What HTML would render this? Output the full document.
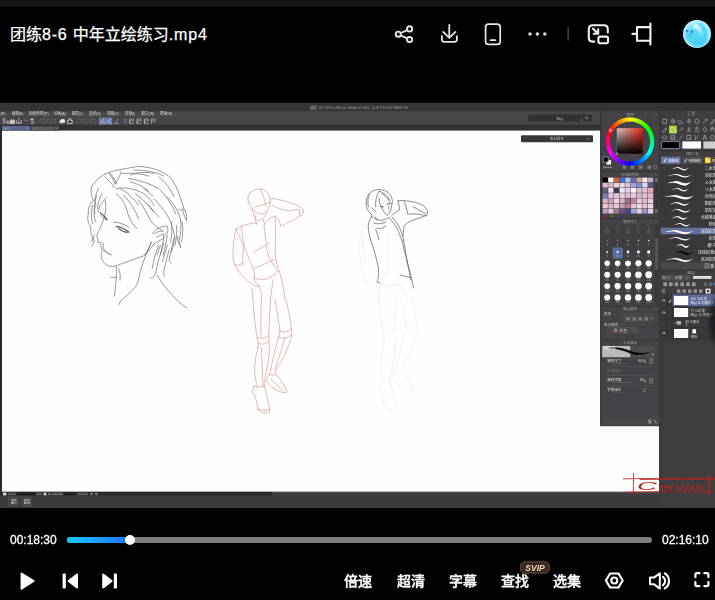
<!DOCTYPE html>
<html lang="zh-CN">
<head>
<meta charset="utf-8">
<title>团练8-6 中年立绘练习.mp4</title>
<style>
*{margin:0;padding:0;box-sizing:border-box}
html,body{width:715px;height:600px;overflow:hidden;background:#000}
body{position:relative;font-family:"Liberation Sans","Noto Sans CJK SC",sans-serif;color:#fff}
.abs{position:absolute}
#topstrip{left:0;top:0;width:715px;height:7px;background:linear-gradient(#151515,#181818)}
#title .ls{letter-spacing:0.8px}
#title{-webkit-text-stroke:0.25px #fff;left:10px;top:24px;font-size:16px;line-height:22px;white-space:nowrap;color:#fff}
.t{font-size:12px;line-height:14px;color:#fff;white-space:nowrap;-webkit-text-stroke:0.3px #fff}
.lbl{font-size:14px;line-height:20px;color:#fff;white-space:nowrap;font-weight:500;-webkit-text-stroke:0.35px #fff}
#bar{left:67px;top:537px;width:585px;height:6px;border-radius:3px;background:#7d7d7d}
#fill{left:67px;top:537px;width:64px;height:6px;border-radius:3px;background:linear-gradient(90deg,#1fc6ff,#1a73ff)}
#knob{left:125px;top:535px;width:10px;height:10px;border-radius:50%;background:#fff}
#video{left:0;top:103px;width:715px;height:405px;display:block}
#chrome{left:0;top:0;width:715px;height:600px;display:block;pointer-events:none}
</style>
</head>
<body>
<div class="abs" id="topstrip"></div>
<div class="abs" id="title">团练<span class="ls">8-6 </span>中年立绘练习<span class="ls">.mp4</span></div>

<!-- VIDEO FRAME -->
<svg class="abs" id="video" viewBox="0 103 715 405">
<defs><filter id="fblur" filterUnits="userSpaceOnUse" x="-5" y="103.8" width="725" height="403.8"><feGaussianBlur stdDeviation="0.32"/></filter><filter id="soft" x="-5%" y="-5%" width="110%" height="110%"><feGaussianBlur stdDeviation="0.35"/></filter><filter id="soft2" x="-5%" y="-5%" width="110%" height="110%"><feGaussianBlur stdDeviation="0.5"/></filter><filter id="soft3" x="-5%" y="-5%" width="110%" height="110%"><feGaussianBlur stdDeviation="0.3"/></filter></defs>
<rect x="0" y="103.8" width="715" height="403.8" fill="#3e3d40"/>
<g filter="url(#fblur)">
<rect x="-5" y="103" width="725" height="405" fill="#3e3d40"/>

<!-- app chrome backgrounds -->
<rect x="0" y="103.8" width="715" height="7.5" fill="#353436"/>
<rect x="0" y="111.3" width="715" height="13.7" fill="#49484b"/>
<rect x="0" y="124.6" width="660" height="6.2" fill="#323133"/>
<rect x="0" y="130.6" width="2" height="361" fill="#2a2a2c"/>
<rect x="2" y="130.6" width="657.1" height="361.2" fill="#fefefe"/>
<rect x="0" y="491.8" width="272" height="4" fill="#2c2c2e"/><rect x="272" y="491.8" width="388" height="1.6" fill="#4c4c4e"/>
<rect x="0" y="495.8" width="660" height="11.8" fill="#3b3a3d"/>
<!-- title text -->
<text x="359" y="109" font-family="'Liberation Sans','Noto Sans CJK SC',sans-serif" font-size="4.2" fill="#a2a2a2" text-anchor="middle" textLength="98" lengthAdjust="spacingAndGlyphs" filter="url(#soft)">插画* (11 7376 x 4967 px 400dpi 12.0%) - CLIP STUDIO PAINT EX</text>
<!-- menu text -->
<g font-family="'Liberation Sans','Noto Sans CJK SC',sans-serif" font-size="4" fill="#dcdcdc" filter="url(#soft)">
<text x="-3.5" y="115.1" textLength="9.0" lengthAdjust="spacingAndGlyphs">件(F)</text>
<text x="12.1" y="115.1" textLength="11.4" lengthAdjust="spacingAndGlyphs">编辑(E)</text>
<text x="28.5" y="115.1" textLength="20.2" lengthAdjust="spacingAndGlyphs">页面管理(P)</text>
<text x="54" y="115.1" textLength="11.8" lengthAdjust="spacingAndGlyphs">动画(A)</text>
<text x="72.1" y="115.1" textLength="11.3" lengthAdjust="spacingAndGlyphs">图层(L)</text>
<text x="88.9" y="115.1" textLength="11.8" lengthAdjust="spacingAndGlyphs">选择(S)</text>
<text x="107" y="115.1" textLength="11.7" lengthAdjust="spacingAndGlyphs">视图(V)</text>
<text x="124.9" y="115.1" textLength="10.4" lengthAdjust="spacingAndGlyphs">滤镜(I)</text>
<text x="141.2" y="115.1" textLength="13.1" lengthAdjust="spacingAndGlyphs">窗口(W)</text>
<text x="160.1" y="115.1" textLength="12.1" lengthAdjust="spacingAndGlyphs">帮助(H)</text>
</g>
<!-- toolbar icons -->
<rect x="0" y="117.6" width="600" height="7.2" fill="#464548"/>
<g fill="none" stroke="#cdcdcd" stroke-width=".75" stroke-linecap="round" stroke-linejoin="round" filter="url(#soft)">
<path d="M5.4 118.8 H3 V120.8 H5 Q6 121.8 5 123 H3 M6.6 121 q1.4 -.6 1.6 1 q-.4 1.6 -1.6 .6 M8.2 121 v3"/>
<path d="M10 123.2 V121 l1.2 -1.6 1.2 1.6 V123.2 Z M12.6 123.2 v-2.6 l1 -1 1 1 v2.6z" fill="#cdcdcd"/>
<path d="M16.4 120.4 V123.2 H21.2 V120.4 M18.8 118.6 V123.2"/>
<path d="M24.4 120.2 H28" opacity=".55"/>
<path d="M30.4 119.4 H33.6 M32 118.4 V120 M31 121.2 Q34.4 120.6 34 122.6 Q33.4 123.8 31.6 123.4"/>
<path d="M37.4 123 l3.4 -4 M42 119 h3.6 v4 h-3.6z M48 119 h3.6 v4 h-3.6z M54 119.6 h2 M54 121 h2 M54 122.4 h2" opacity=".22"/>
<path d="M60 122.6 q-1 -1.6 .6 -2 q.6 -1.8 2.4 -1 q1.8 -.4 1.6 1.4 q1 1 -.4 1.6z" fill="#f2f2f2" stroke="#f2f2f2"/>
<path d="M67.6 123.2 V120.4 H69 V118.8 H70.8 V120.4 H72.2 V123.2 Z" stroke="#e8e8e8"/>
<path d="M77 119 h4 v4 h-4z M84 119 h4 v4 h-4z M91 119 h4 v4 h-4z" opacity=".2"/>
</g>
<rect x="99" y="117.6" width="13.4" height="7" fill="#6f7ba6"/>
<g stroke="#d0d6ee" stroke-width=".8" fill="none"><path d="M100.6 123 l3.6-4.4 M103 123 h2 M107 123 l3.6-4.4 M109.4 123 h2"/></g>
<g stroke="#c2c2c2" stroke-width=".65" fill="none" filter="url(#soft)">
<path d="M114.6 123.2 l4-4.4 M114.6 123.4 h4.4"/>
<path d="M123.4 119.4 h3.6 M123.4 121.2 h3.6 M123.4 123 h3.6" opacity=".5"/>
<path d="M129.6 119 h4 v2 h-4 v2.6 h4 M129.6 119 v4.6"/>
<path d="M137 119 h4 v2 h-4 v2.6 h4 M137 119 v4.6"/>
<path d="M144.4 119 h4 v2 h-4 v2.6 h4 M144.4 119 v4.6"/>
<path d="M151.4 119 h3.4 v2.2 h-3.4 M151.4 119 v4.8"/>
</g>
<!-- document tabs -->
<rect x="2" y="126" width="28" height="4.8" fill="#5c678f"/>
<rect x="30.4" y="126" width="28.4" height="4.8" fill="#4c4c4e"/>
<g font-family="'Liberation Sans','Noto Sans CJK SC',sans-serif" font-size="3.2" fill="#c4c8dc" opacity=".55" filter="url(#soft)">
<text x="3" y="129.8">插画*</text><text x="26.6" y="129.8">×</text>
<text x="32" y="129.8" fill="#b0b0b0" textLength="21">插画(2)(12.0%)</text><text x="55.4" y="129.8" fill="#c8c8c8">×</text>
</g>
<!-- command bar boxes -->
<rect x="528.2" y="114.4" width="63.8" height="7.2" rx="1" fill="#323234"/>
<text x="560" y="119.8" font-family="'Liberation Sans','Noto Sans CJK SC',sans-serif" font-size="3.5" fill="#a6a6a6" text-anchor="middle" filter="url(#soft)">图层</text>
<path d="M580 120 h3 M586 117.4 l1.6 1.6 M586.6 116.8 a1 1 0 1 0 .1 0" stroke="#9a9a9a" stroke-width=".6" fill="none"/>
<rect x="521" y="135.2" width="72" height="7" rx="1" fill="#38383a"/>
<text x="557" y="140.4" font-family="'Liberation Sans','Noto Sans CJK SC',sans-serif" font-size="3.5" fill="#b0b0b0" text-anchor="middle" filter="url(#soft)">素材属性</text>
<path d="M586.6 138.8 h3" stroke="#8a8a8a" stroke-width=".7"/>
<!-- status bar bits -->
<g fill="#a8a8a8">
<rect x="3" y="492.6" width="3.4" height="2.8" fill="#d8d8d8"/><rect x="8" y="492.8" width="8" height="2.4" opacity=".35"/>
<rect x="17" y="493" width="18" height="2" fill="#1e1e20"/><rect x="36" y="492.8" width="6" height="2.4" opacity=".4"/>
<rect x="43.6" y="492.6" width="2.8" height="2.8" fill="#d0d0d0"/><rect x="48" y="492.8" width="3" height="2.4" opacity=".5"/>
<rect x="52" y="492.8" width="11" height="2.4" opacity=".45"/><rect x="64" y="493" width="12" height="2" fill="#1e1e20"/>
<rect x="77" y="492.8" width="11" height="2.4" opacity=".35"/><rect x="90" y="492.8" width="3" height="2.4" opacity=".5"/><rect x="95" y="492.8" width="3" height="2.4" opacity=".5"/>
</g>

<!-- bottom icons -->
<g fill="#464547" stroke="#5a5a5c" stroke-width=".5"><rect x="8.6" y="497" width="10.2" height="9.2"/><rect x="21.2" y="497" width="10.6" height="9.2"/></g>
<g fill="#a4a4a4" filter="url(#soft)"><rect x="11.2" y="499.2" width="5.4" height="1.4"/><rect x="11.2" y="501.4" width="3" height="2.6"/><rect x="15" y="501.4" width="1.6" height="2.6" opacity=".6"/><rect x="24" y="499.2" width="6" height="1.4"/><rect x="24" y="501.4" width="2.4" height="2.6"/><rect x="27" y="501.4" width="3" height="2.6" opacity=".7"/></g>
<!-- floating palette panel -->
<rect x="600.2" y="111.3" width="58.8" height="314.4" fill="#444346"/>
<rect x="600.2" y="111.3" width="1.3" height="314.4" fill="#333234"/>
<rect x="658.9" y="111.3" width="1" height="315" fill="#302f31"/>
<rect x="659.2" y="111.3" width="55.8" height="396.3" fill="#403e41"/><rect x="659.2" y="111.3" width="3.6" height="396.3" fill="#3b3a3c"/>
<text x="630" y="115.8" font-family="'Liberation Sans','Noto Sans CJK SC',sans-serif" font-size="3.8" fill="#a0a0a0" text-anchor="middle" filter="url(#soft)">色环</text>
<path d="M653 114.6 l1.6 0 M655.6 113.6 l1.2 1.2 -1.2 1.2" stroke="#8a8a8a" stroke-width=".5" fill="none"/>
<g filter="url(#soft)">
<path d="M629.75 117.40A24.2 24.2 0 0 1 632.36 117.52L631.96 121.60A20.1 20.1 0 0 0 629.79 121.50Z" fill="#f4ff00"/>
<path d="M631.86 117.47A24.2 24.2 0 0 1 634.45 117.81L633.70 121.84A20.1 20.1 0 0 0 631.54 121.56Z" fill="#dfff00"/>
<path d="M633.95 117.72A24.2 24.2 0 0 1 636.51 118.29L635.41 122.24A20.1 20.1 0 0 0 633.28 121.77Z" fill="#c9ff00"/>
<path d="M636.02 118.16A24.2 24.2 0 0 1 638.51 118.95L637.07 122.79A20.1 20.1 0 0 0 635.00 122.13Z" fill="#b4ff00"/>
<path d="M638.04 118.77A24.2 24.2 0 0 1 640.46 119.78L638.68 123.47A20.1 20.1 0 0 0 636.68 122.64Z" fill="#9fff00"/>
<path d="M640.00 119.56A24.2 24.2 0 0 1 642.32 120.77L640.23 124.30A20.1 20.1 0 0 0 638.30 123.30Z" fill="#8aff00"/>
<path d="M641.88 120.52A24.2 24.2 0 0 1 644.09 121.92L641.70 125.26A20.1 20.1 0 0 0 639.87 124.09Z" fill="#74ff00"/>
<path d="M643.67 121.63A24.2 24.2 0 0 1 645.75 123.23L643.08 126.34A20.1 20.1 0 0 0 641.36 125.02Z" fill="#5fff00"/>
<path d="M645.36 122.90A24.2 24.2 0 0 1 647.29 124.67L644.36 127.54A20.1 20.1 0 0 0 642.76 126.07Z" fill="#4aff00"/>
<path d="M646.93 124.31A24.2 24.2 0 0 1 648.70 126.24L645.53 128.84A20.1 20.1 0 0 0 644.06 127.24Z" fill="#35ff00"/>
<path d="M648.37 125.85A24.2 24.2 0 0 1 649.97 127.93L646.58 130.24A20.1 20.1 0 0 0 645.26 128.52Z" fill="#1fff00"/>
<path d="M649.68 127.51A24.2 24.2 0 0 1 651.08 129.72L647.51 131.73A20.1 20.1 0 0 0 646.34 129.90Z" fill="#0aff00"/>
<path d="M650.83 129.28A24.2 24.2 0 0 1 652.04 131.60L648.30 133.30A20.1 20.1 0 0 0 647.30 131.37Z" fill="#00ff0a"/>
<path d="M651.82 131.14A24.2 24.2 0 0 1 652.83 133.56L648.96 134.92A20.1 20.1 0 0 0 648.13 132.92Z" fill="#00ff1f"/>
<path d="M652.65 133.09A24.2 24.2 0 0 1 653.44 135.58L649.47 136.60A20.1 20.1 0 0 0 648.81 134.53Z" fill="#00ff35"/>
<path d="M653.31 135.09A24.2 24.2 0 0 1 653.88 137.65L649.83 138.32A20.1 20.1 0 0 0 649.36 136.19Z" fill="#00ff4a"/>
<path d="M653.79 137.15A24.2 24.2 0 0 1 654.13 139.74L650.04 140.06A20.1 20.1 0 0 0 649.76 137.90Z" fill="#00ff5f"/>
<path d="M654.08 139.24A24.2 24.2 0 0 1 654.20 141.85L650.10 141.81A20.1 20.1 0 0 0 650.00 139.64Z" fill="#00ff74"/>
<path d="M654.20 141.35A24.2 24.2 0 0 1 654.08 143.96L650.00 143.56A20.1 20.1 0 0 0 650.10 141.39Z" fill="#00ff8a"/>
<path d="M654.13 143.46A24.2 24.2 0 0 1 653.79 146.05L649.76 145.30A20.1 20.1 0 0 0 650.04 143.14Z" fill="#00ff9f"/>
<path d="M653.88 145.55A24.2 24.2 0 0 1 653.31 148.11L649.36 147.01A20.1 20.1 0 0 0 649.83 144.88Z" fill="#00ffb4"/>
<path d="M653.44 147.62A24.2 24.2 0 0 1 652.65 150.11L648.81 148.67A20.1 20.1 0 0 0 649.47 146.60Z" fill="#00ffc9"/>
<path d="M652.83 149.64A24.2 24.2 0 0 1 651.82 152.06L648.13 150.28A20.1 20.1 0 0 0 648.96 148.28Z" fill="#00ffdf"/>
<path d="M652.04 151.60A24.2 24.2 0 0 1 650.83 153.92L647.30 151.83A20.1 20.1 0 0 0 648.30 149.90Z" fill="#00fff4"/>
<path d="M651.08 153.48A24.2 24.2 0 0 1 649.68 155.69L646.34 153.30A20.1 20.1 0 0 0 647.51 151.47Z" fill="#00f4ff"/>
<path d="M649.97 155.27A24.2 24.2 0 0 1 648.37 157.35L645.26 154.68A20.1 20.1 0 0 0 646.58 152.96Z" fill="#00dfff"/>
<path d="M648.70 156.96A24.2 24.2 0 0 1 646.93 158.89L644.06 155.96A20.1 20.1 0 0 0 645.53 154.36Z" fill="#00c9ff"/>
<path d="M647.29 158.53A24.2 24.2 0 0 1 645.36 160.30L642.76 157.13A20.1 20.1 0 0 0 644.36 155.66Z" fill="#00b4ff"/>
<path d="M645.75 159.97A24.2 24.2 0 0 1 643.67 161.57L641.36 158.18A20.1 20.1 0 0 0 643.08 156.86Z" fill="#009fff"/>
<path d="M644.09 161.28A24.2 24.2 0 0 1 641.88 162.68L639.87 159.11A20.1 20.1 0 0 0 641.70 157.94Z" fill="#008aff"/>
<path d="M642.32 162.43A24.2 24.2 0 0 1 640.00 163.64L638.30 159.90A20.1 20.1 0 0 0 640.23 158.90Z" fill="#0074ff"/>
<path d="M640.46 163.42A24.2 24.2 0 0 1 638.04 164.43L636.68 160.56A20.1 20.1 0 0 0 638.68 159.73Z" fill="#005fff"/>
<path d="M638.51 164.25A24.2 24.2 0 0 1 636.02 165.04L635.00 161.07A20.1 20.1 0 0 0 637.07 160.41Z" fill="#004aff"/>
<path d="M636.51 164.91A24.2 24.2 0 0 1 633.95 165.48L633.28 161.43A20.1 20.1 0 0 0 635.41 160.96Z" fill="#0035ff"/>
<path d="M634.45 165.39A24.2 24.2 0 0 1 631.86 165.73L631.54 161.64A20.1 20.1 0 0 0 633.70 161.36Z" fill="#001fff"/>
<path d="M632.36 165.68A24.2 24.2 0 0 1 629.75 165.80L629.79 161.70A20.1 20.1 0 0 0 631.96 161.60Z" fill="#000aff"/>
<path d="M630.25 165.80A24.2 24.2 0 0 1 627.64 165.68L628.04 161.60A20.1 20.1 0 0 0 630.21 161.70Z" fill="#0a00ff"/>
<path d="M628.14 165.73A24.2 24.2 0 0 1 625.55 165.39L626.30 161.36A20.1 20.1 0 0 0 628.46 161.64Z" fill="#1f00ff"/>
<path d="M626.05 165.48A24.2 24.2 0 0 1 623.49 164.91L624.59 160.96A20.1 20.1 0 0 0 626.72 161.43Z" fill="#3500ff"/>
<path d="M623.98 165.04A24.2 24.2 0 0 1 621.49 164.25L622.93 160.41A20.1 20.1 0 0 0 625.00 161.07Z" fill="#4a00ff"/>
<path d="M621.96 164.43A24.2 24.2 0 0 1 619.54 163.42L621.32 159.73A20.1 20.1 0 0 0 623.32 160.56Z" fill="#5f00ff"/>
<path d="M620.00 163.64A24.2 24.2 0 0 1 617.68 162.43L619.77 158.90A20.1 20.1 0 0 0 621.70 159.90Z" fill="#7400ff"/>
<path d="M618.12 162.68A24.2 24.2 0 0 1 615.91 161.28L618.30 157.94A20.1 20.1 0 0 0 620.13 159.11Z" fill="#8a00ff"/>
<path d="M616.33 161.57A24.2 24.2 0 0 1 614.25 159.97L616.92 156.86A20.1 20.1 0 0 0 618.64 158.18Z" fill="#9f00ff"/>
<path d="M614.64 160.30A24.2 24.2 0 0 1 612.71 158.53L615.64 155.66A20.1 20.1 0 0 0 617.24 157.13Z" fill="#b400ff"/>
<path d="M613.07 158.89A24.2 24.2 0 0 1 611.30 156.96L614.47 154.36A20.1 20.1 0 0 0 615.94 155.96Z" fill="#c900ff"/>
<path d="M611.63 157.35A24.2 24.2 0 0 1 610.03 155.27L613.42 152.96A20.1 20.1 0 0 0 614.74 154.68Z" fill="#df00ff"/>
<path d="M610.32 155.69A24.2 24.2 0 0 1 608.92 153.48L612.49 151.47A20.1 20.1 0 0 0 613.66 153.30Z" fill="#f400ff"/>
<path d="M609.17 153.92A24.2 24.2 0 0 1 607.96 151.60L611.70 149.90A20.1 20.1 0 0 0 612.70 151.83Z" fill="#ff00f4"/>
<path d="M608.18 152.06A24.2 24.2 0 0 1 607.17 149.64L611.04 148.28A20.1 20.1 0 0 0 611.87 150.28Z" fill="#ff00df"/>
<path d="M607.35 150.11A24.2 24.2 0 0 1 606.56 147.62L610.53 146.60A20.1 20.1 0 0 0 611.19 148.67Z" fill="#ff00c9"/>
<path d="M606.69 148.11A24.2 24.2 0 0 1 606.12 145.55L610.17 144.88A20.1 20.1 0 0 0 610.64 147.01Z" fill="#ff00b4"/>
<path d="M606.21 146.05A24.2 24.2 0 0 1 605.87 143.46L609.96 143.14A20.1 20.1 0 0 0 610.24 145.30Z" fill="#ff009f"/>
<path d="M605.92 143.96A24.2 24.2 0 0 1 605.80 141.35L609.90 141.39A20.1 20.1 0 0 0 610.00 143.56Z" fill="#ff008a"/>
<path d="M605.80 141.85A24.2 24.2 0 0 1 605.92 139.24L610.00 139.64A20.1 20.1 0 0 0 609.90 141.81Z" fill="#ff0074"/>
<path d="M605.87 139.74A24.2 24.2 0 0 1 606.21 137.15L610.24 137.90A20.1 20.1 0 0 0 609.96 140.06Z" fill="#ff005f"/>
<path d="M606.12 137.65A24.2 24.2 0 0 1 606.69 135.09L610.64 136.19A20.1 20.1 0 0 0 610.17 138.32Z" fill="#ff004a"/>
<path d="M606.56 135.58A24.2 24.2 0 0 1 607.35 133.09L611.19 134.53A20.1 20.1 0 0 0 610.53 136.60Z" fill="#ff0035"/>
<path d="M607.17 133.56A24.2 24.2 0 0 1 608.18 131.14L611.87 132.92A20.1 20.1 0 0 0 611.04 134.92Z" fill="#ff001f"/>
<path d="M607.96 131.60A24.2 24.2 0 0 1 609.17 129.28L612.70 131.37A20.1 20.1 0 0 0 611.70 133.30Z" fill="#ff000a"/>
<path d="M608.92 129.72A24.2 24.2 0 0 1 610.32 127.51L613.66 129.90A20.1 20.1 0 0 0 612.49 131.73Z" fill="#ff0a00"/>
<path d="M610.03 127.93A24.2 24.2 0 0 1 611.63 125.85L614.74 128.52A20.1 20.1 0 0 0 613.42 130.24Z" fill="#ff1f00"/>
<path d="M611.30 126.24A24.2 24.2 0 0 1 613.07 124.31L615.94 127.24A20.1 20.1 0 0 0 614.47 128.84Z" fill="#ff3500"/>
<path d="M612.71 124.67A24.2 24.2 0 0 1 614.64 122.90L617.24 126.07A20.1 20.1 0 0 0 615.64 127.54Z" fill="#ff4a00"/>
<path d="M614.25 123.23A24.2 24.2 0 0 1 616.33 121.63L618.64 125.02A20.1 20.1 0 0 0 616.92 126.34Z" fill="#ff5f00"/>
<path d="M615.91 121.92A24.2 24.2 0 0 1 618.12 120.52L620.13 124.09A20.1 20.1 0 0 0 618.30 125.26Z" fill="#ff7400"/>
<path d="M617.68 120.77A24.2 24.2 0 0 1 620.00 119.56L621.70 123.30A20.1 20.1 0 0 0 619.77 124.30Z" fill="#ff8a00"/>
<path d="M619.54 119.78A24.2 24.2 0 0 1 621.96 118.77L623.32 122.64A20.1 20.1 0 0 0 621.32 123.47Z" fill="#ff9f00"/>
<path d="M621.49 118.95A24.2 24.2 0 0 1 623.98 118.16L625.00 122.13A20.1 20.1 0 0 0 622.93 122.79Z" fill="#ffb400"/>
<path d="M623.49 118.29A24.2 24.2 0 0 1 626.05 117.72L626.72 121.77A20.1 20.1 0 0 0 624.59 122.24Z" fill="#ffc900"/>
<path d="M625.55 117.81A24.2 24.2 0 0 1 628.14 117.47L628.46 121.56A20.1 20.1 0 0 0 626.30 121.84Z" fill="#ffdf00"/>
<path d="M627.64 117.52A24.2 24.2 0 0 1 630.25 117.40L630.21 121.50A20.1 20.1 0 0 0 628.04 121.60Z" fill="#fff400"/>
</g>
<defs><linearGradient id="svh" x1="0" y1="0" x2="1" y2="0"><stop offset="0" stop-color="#dccaca"/><stop offset="1" stop-color="#ee240e"/></linearGradient><linearGradient id="svv" x1="0" y1="0" x2="0" y2="1"><stop offset="0" stop-color="#000" stop-opacity="0"/><stop offset="1" stop-color="#000" stop-opacity="1"/></linearGradient></defs>
<rect x="616.8" y="128.2" width="26" height="25.6" fill="url(#svh)"/><rect x="616.8" y="128.2" width="26" height="25.6" fill="url(#svv)"/>
<circle cx="610.6" cy="130.4" r="1.3" fill="none" stroke="#fff" stroke-width=".7"/>
<circle cx="617" cy="153.6" r=".9" fill="none" stroke="#ddd" stroke-width=".5"/>
<rect x="606.4" y="160" width="4.6" height="4.6" fill="#fff" stroke="#888" stroke-width=".4"/>
<rect x="603.2" y="157" width="5" height="5" fill="#05050f" stroke="#9a9ac8" stroke-width=".7"/>
<rect x="603" y="166.6" width="9" height="1.6" fill="#9a9a9a" opacity=".7"/>
<rect x="622.6" y="165.4" width="3.6" height="3.4" fill="#8e8e90" opacity=".7" filter="url(#soft)"/>
<rect x="630.6" y="165.4" width="3.6" height="3.4" fill="#8e8e90" opacity=".7" filter="url(#soft)"/>
<rect x="639" y="165.4" width="3.6" height="3.4" fill="#8e8e90" opacity=".7" filter="url(#soft)"/>
<rect x="647.4" y="165.4" width="3.6" height="3.4" fill="#8e8e90" opacity=".7" filter="url(#soft)"/>
<circle cx="655" cy="166.8" r="1.7" fill="none" stroke="#8a8a8a" stroke-width=".6"/>
<rect x="601.8" y="171" width="57.4" height=".6" fill="#2c2c2e"/>
<text x="630" y="175.6" font-family="'Liberation Sans','Noto Sans CJK SC',sans-serif" font-size="3.5" fill="#9c9c9c" text-anchor="middle" filter="url(#soft)">标准颜色集</text>
<path d="M651 175 h1.8 M655.4 173.4 l1.2 1.2 -1.2 1.2" stroke="#8a8a8a" stroke-width=".5" fill="none"/>
<g filter="url(#soft)"><rect x="602.2" y="177.2" width="51.8" height="37" fill="#4a3e4c"/>
<rect x="602.6" y="177.6" width="5.22" height="4.75" fill="#000000"/>
<rect x="608.3" y="177.6" width="5.22" height="4.75" fill="#ffffff"/>
<rect x="613.9" y="177.6" width="5.22" height="4.75" fill="#d4622c"/>
<rect x="619.6" y="177.6" width="5.22" height="4.75" fill="#3c74d8"/>
<rect x="625.3" y="177.6" width="5.22" height="4.75" fill="#b0c4f0"/>
<rect x="631.0" y="177.6" width="5.22" height="4.75" fill="#6c6cac"/>
<rect x="636.6" y="177.6" width="5.22" height="4.75" fill="#d8a8a0"/>
<rect x="642.3" y="177.6" width="5.22" height="4.75" fill="#f8f0f4"/>
<rect x="648.0" y="177.6" width="5.22" height="4.75" fill="#c8a8cc"/>
<rect x="602.6" y="182.8" width="5.22" height="4.75" fill="#dcbcd0"/>
<rect x="608.3" y="182.8" width="5.22" height="4.75" fill="#d4b4c8"/>
<rect x="613.9" y="182.8" width="5.22" height="4.75" fill="#e8d0dc"/>
<rect x="619.6" y="182.8" width="5.22" height="4.75" fill="#ecd8e4"/>
<rect x="625.3" y="182.8" width="5.22" height="4.75" fill="#d8c0d8"/>
<rect x="631.0" y="182.8" width="5.22" height="4.75" fill="#a8a8e0"/>
<rect x="636.6" y="182.8" width="5.22" height="4.75" fill="#8090c8"/>
<rect x="642.3" y="182.8" width="5.22" height="4.75" fill="#e0dcec"/>
<rect x="648.0" y="182.8" width="5.22" height="4.75" fill="#585880"/>
<rect x="602.6" y="188.0" width="5.22" height="4.75" fill="#5c5c74"/>
<rect x="608.3" y="188.0" width="5.22" height="4.75" fill="#ece4f0"/>
<rect x="613.9" y="188.0" width="5.22" height="4.75" fill="#38384c"/>
<rect x="619.6" y="188.0" width="5.22" height="4.75" fill="#f0e8f0"/>
<rect x="625.3" y="188.0" width="5.22" height="4.75" fill="#e4d0e0"/>
<rect x="631.0" y="188.0" width="5.22" height="4.75" fill="#fcf8fc"/>
<rect x="636.6" y="188.0" width="5.22" height="4.75" fill="#d8bcd0"/>
<rect x="642.3" y="188.0" width="5.22" height="4.75" fill="#e0c0d4"/>
<rect x="648.0" y="188.0" width="5.22" height="4.75" fill="#e8a4b8"/>
<rect x="602.6" y="193.2" width="5.22" height="4.75" fill="#7480a4"/>
<rect x="608.3" y="193.2" width="5.22" height="4.75" fill="#dcc8d8"/>
<rect x="613.9" y="193.2" width="5.22" height="4.75" fill="#e0c4d4"/>
<rect x="619.6" y="193.2" width="5.22" height="4.75" fill="#e8d0dc"/>
<rect x="625.3" y="193.2" width="5.22" height="4.75" fill="#dcc0d0"/>
<rect x="631.0" y="193.2" width="5.22" height="4.75" fill="#e4ccdc"/>
<rect x="636.6" y="193.2" width="5.22" height="4.75" fill="#d8b8cc"/>
<rect x="642.3" y="193.2" width="5.22" height="4.75" fill="#e0c0d4"/>
<rect x="648.0" y="193.2" width="5.22" height="4.75" fill="#e4b4c8"/>
<rect x="602.6" y="198.4" width="5.22" height="4.75" fill="#dcb4cc"/>
<rect x="608.3" y="198.4" width="5.22" height="4.75" fill="#c4a0bc"/>
<rect x="613.9" y="198.4" width="5.22" height="4.75" fill="#ecd4e0"/>
<rect x="619.6" y="198.4" width="5.22" height="4.75" fill="#d4b4c4"/>
<rect x="625.3" y="198.4" width="5.22" height="4.75" fill="#a46c84"/>
<rect x="631.0" y="198.4" width="5.22" height="4.75" fill="#bc8898"/>
<rect x="636.6" y="198.4" width="5.22" height="4.75" fill="#e8ccd8"/>
<rect x="642.3" y="198.4" width="5.22" height="4.75" fill="#dcbcd0"/>
<rect x="648.0" y="198.4" width="5.22" height="4.75" fill="#e8ccdc"/>
<rect x="602.6" y="203.6" width="5.22" height="4.75" fill="#e8ccdc"/>
<rect x="608.3" y="203.6" width="5.22" height="4.75" fill="#d8b4c8"/>
<rect x="613.9" y="203.6" width="5.22" height="4.75" fill="#e4c8d8"/>
<rect x="619.6" y="203.6" width="5.22" height="4.75" fill="#c49cb0"/>
<rect x="625.3" y="203.6" width="5.22" height="4.75" fill="#b48094"/>
<rect x="631.0" y="203.6" width="5.22" height="4.75" fill="#e4c8d4"/>
<rect x="636.6" y="203.6" width="5.22" height="4.75" fill="#ecd8e4"/>
<rect x="642.3" y="203.6" width="5.22" height="4.75" fill="#e0c4d8"/>
<rect x="648.0" y="203.6" width="5.22" height="4.75" fill="#ecd4e0"/>
<rect x="602.6" y="208.8" width="5.22" height="4.75" fill="#bc9cb8"/>
<rect x="608.3" y="208.8" width="5.22" height="4.75" fill="#e4c8dc"/>
<rect x="613.9" y="208.8" width="5.22" height="4.75" fill="#a07890"/>
<rect x="619.6" y="208.8" width="5.22" height="4.75" fill="#785478"/>
<rect x="625.3" y="208.8" width="5.22" height="4.75" fill="#484880"/>
<rect x="631.0" y="208.8" width="5.22" height="4.75" fill="#98a4e0"/>
<rect x="636.6" y="208.8" width="5.22" height="4.75" fill="#e4d0e4"/>
<rect x="642.3" y="208.8" width="5.22" height="4.75" fill="#9898d0"/>
<rect x="648.0" y="208.8" width="5.22" height="4.75" fill="#ecccd8"/>
</g>
<rect x="654.6" y="176.8" width="3.6" height="37.8" fill="#39383b"/><rect x="655" y="178" width="2.8" height="4" fill="#6a6a6c"/><rect x="655" y="209" width="2.8" height="4" fill="#6a6a6c"/>
<rect x="602.6" y="215.4" width="2.4" height="1.6" fill="#c01818"/><rect x="610.6" y="215.4" width="2.4" height="1.6" fill="#18a018"/><rect x="620.6" y="215.4" width="2.4" height="1.6" fill="#2828c8"/>
<rect x="601.8" y="218.4" width="57.4" height=".6" fill="#2c2c2e"/>
<text x="630" y="223" font-family="'Liberation Sans','Noto Sans CJK SC',sans-serif" font-size="3.5" fill="#9c9c9c" text-anchor="middle" filter="url(#soft)">笔刷尺寸</text>
<path d="M651 222.4 h1.8 M655.4 220.8 l1.2 1.2 -1.2 1.2" stroke="#8a8a8a" stroke-width=".5" fill="none"/>
<rect x="602.4" y="224.6" width="52" height="80" fill="#414043"/>
<rect x="612.5" y="224.6" width=".4" height="80" fill="#38373a"/>
<rect x="622.9" y="224.6" width=".4" height="80" fill="#38373a"/>
<rect x="633.3" y="224.6" width=".4" height="80" fill="#38373a"/>
<rect x="643.6" y="224.6" width=".4" height="80" fill="#38373a"/>
<rect x="654.8" y="224.6" width="3.4" height="80" fill="#38373a"/><rect x="655.2" y="238" width="2.6" height="32" fill="#59595b"/>
<rect x="612.7" y="247.4" width="10.2" height="11.2" fill="#5a6a9a"/>
<g filter="url(#soft)">
<rect x="606.9000000000001" y="226.0" width=".5" height="3" fill="#6e6e70"/>
<text x="607.2" y="233.0" font-family="'Liberation Sans','Noto Sans CJK SC',sans-serif" font-size="2.6" fill="#b4b8c8" text-anchor="middle" opacity=".8">0.7</text>
<rect x="617.3000000000001" y="226.0" width=".5" height="3" fill="#6e6e70"/>
<text x="617.6" y="233.0" font-family="'Liberation Sans','Noto Sans CJK SC',sans-serif" font-size="2.6" fill="#b4b8c8" text-anchor="middle" opacity=".8">1</text>
<rect x="627.7" y="226.0" width=".5" height="3" fill="#6e6e70"/>
<text x="628" y="233.0" font-family="'Liberation Sans','Noto Sans CJK SC',sans-serif" font-size="2.6" fill="#b4b8c8" text-anchor="middle" opacity=".8">1.5</text>
<rect x="638.1" y="226.0" width=".5" height="3" fill="#6e6e70"/>
<text x="638.4" y="233.0" font-family="'Liberation Sans','Noto Sans CJK SC',sans-serif" font-size="2.6" fill="#b4b8c8" text-anchor="middle" opacity=".8">2</text>
<rect x="648.4000000000001" y="226.0" width=".5" height="3" fill="#6e6e70"/>
<text x="648.7" y="233.0" font-family="'Liberation Sans','Noto Sans CJK SC',sans-serif" font-size="2.6" fill="#b4b8c8" text-anchor="middle" opacity=".8">2.5</text>
<circle cx="607.2" cy="240.5" r="0.40" fill="#fdfdfd"/>
<text x="607.2" y="245.7" font-family="'Liberation Sans','Noto Sans CJK SC',sans-serif" font-size="2.6" fill="#b4b8c8" text-anchor="middle" opacity=".8">3</text>
<circle cx="617.6" cy="240.5" r="0.47" fill="#fdfdfd"/>
<text x="617.6" y="245.7" font-family="'Liberation Sans','Noto Sans CJK SC',sans-serif" font-size="2.6" fill="#b4b8c8" text-anchor="middle" opacity=".8">4</text>
<circle cx="628" cy="240.5" r="0.55" fill="#fdfdfd"/>
<text x="628" y="245.7" font-family="'Liberation Sans','Noto Sans CJK SC',sans-serif" font-size="2.6" fill="#b4b8c8" text-anchor="middle" opacity=".8">5</text>
<circle cx="638.4" cy="240.5" r="0.63" fill="#fdfdfd"/>
<text x="638.4" y="245.7" font-family="'Liberation Sans','Noto Sans CJK SC',sans-serif" font-size="2.6" fill="#b4b8c8" text-anchor="middle" opacity=".8">6</text>
<circle cx="648.7" cy="240.5" r="0.70" fill="#fdfdfd"/>
<text x="648.7" y="245.7" font-family="'Liberation Sans','Noto Sans CJK SC',sans-serif" font-size="2.6" fill="#b4b8c8" text-anchor="middle" opacity=".8">7</text>
<circle cx="607.2" cy="251.9" r="0.94" fill="#fdfdfd"/>
<text x="607.2" y="257.1" font-family="'Liberation Sans','Noto Sans CJK SC',sans-serif" font-size="2.6" fill="#b4b8c8" text-anchor="middle" opacity=".8">8</text>
<circle cx="617.6" cy="251.9" r="1.12" fill="#fdfdfd"/>
<text x="617.6" y="257.1" font-family="'Liberation Sans','Noto Sans CJK SC',sans-serif" font-size="2.6" fill="#b4b8c8" text-anchor="middle" opacity=".8">10</text>
<circle cx="628" cy="251.9" r="1.30" fill="#fdfdfd"/>
<text x="628" y="257.1" font-family="'Liberation Sans','Noto Sans CJK SC',sans-serif" font-size="2.6" fill="#b4b8c8" text-anchor="middle" opacity=".8">12</text>
<circle cx="638.4" cy="251.9" r="1.48" fill="#fdfdfd"/>
<text x="638.4" y="257.1" font-family="'Liberation Sans','Noto Sans CJK SC',sans-serif" font-size="2.6" fill="#b4b8c8" text-anchor="middle" opacity=".8">15</text>
<circle cx="648.7" cy="251.9" r="1.66" fill="#fdfdfd"/>
<text x="648.7" y="257.1" font-family="'Liberation Sans','Noto Sans CJK SC',sans-serif" font-size="2.6" fill="#b4b8c8" text-anchor="middle" opacity=".8">17</text>
<circle cx="607.2" cy="263.3" r="2.70" fill="#fdfdfd"/>
<text x="607.2" y="269.2" font-family="'Liberation Sans','Noto Sans CJK SC',sans-serif" font-size="2.6" fill="#b4b8c8" text-anchor="middle" opacity=".8">20</text>
<circle cx="617.6" cy="263.3" r="2.81" fill="#fdfdfd"/>
<text x="617.6" y="269.2" font-family="'Liberation Sans','Noto Sans CJK SC',sans-serif" font-size="2.6" fill="#b4b8c8" text-anchor="middle" opacity=".8">25</text>
<circle cx="628" cy="263.3" r="2.91" fill="#fdfdfd"/>
<text x="628" y="269.2" font-family="'Liberation Sans','Noto Sans CJK SC',sans-serif" font-size="2.6" fill="#b4b8c8" text-anchor="middle" opacity=".8">30</text>
<circle cx="638.4" cy="263.3" r="3.02" fill="#fdfdfd"/>
<text x="638.4" y="269.2" font-family="'Liberation Sans','Noto Sans CJK SC',sans-serif" font-size="2.6" fill="#b4b8c8" text-anchor="middle" opacity=".8">40</text>
<circle cx="648.7" cy="263.3" r="3.12" fill="#fdfdfd"/>
<text x="648.7" y="269.2" font-family="'Liberation Sans','Noto Sans CJK SC',sans-serif" font-size="2.6" fill="#b4b8c8" text-anchor="middle" opacity=".8">50</text>
<circle cx="607.2" cy="274.7" r="2.93" fill="#fdfdfd"/>
<text x="607.2" y="280.6" font-family="'Liberation Sans','Noto Sans CJK SC',sans-serif" font-size="2.6" fill="#b4b8c8" text-anchor="middle" opacity=".8">60</text>
<circle cx="617.6" cy="274.7" r="3.04" fill="#fdfdfd"/>
<text x="617.6" y="280.6" font-family="'Liberation Sans','Noto Sans CJK SC',sans-serif" font-size="2.6" fill="#b4b8c8" text-anchor="middle" opacity=".8">70</text>
<circle cx="628" cy="274.7" r="3.15" fill="#fdfdfd"/>
<text x="628" y="280.6" font-family="'Liberation Sans','Noto Sans CJK SC',sans-serif" font-size="2.6" fill="#b4b8c8" text-anchor="middle" opacity=".8">80</text>
<circle cx="638.4" cy="274.7" r="3.27" fill="#fdfdfd"/>
<text x="638.4" y="280.6" font-family="'Liberation Sans','Noto Sans CJK SC',sans-serif" font-size="2.6" fill="#b4b8c8" text-anchor="middle" opacity=".8">100</text>
<circle cx="648.7" cy="274.7" r="3.38" fill="#fdfdfd"/>
<text x="648.7" y="280.6" font-family="'Liberation Sans','Noto Sans CJK SC',sans-serif" font-size="2.6" fill="#b4b8c8" text-anchor="middle" opacity=".8">120</text>
<circle cx="607.2" cy="286.1" r="2.97" fill="#fdfdfd"/>
<text x="607.2" y="292.0" font-family="'Liberation Sans','Noto Sans CJK SC',sans-serif" font-size="2.6" fill="#b4b8c8" text-anchor="middle" opacity=".8">150</text>
<circle cx="617.6" cy="286.1" r="3.09" fill="#fdfdfd"/>
<text x="617.6" y="292.0" font-family="'Liberation Sans','Noto Sans CJK SC',sans-serif" font-size="2.6" fill="#b4b8c8" text-anchor="middle" opacity=".8">170</text>
<circle cx="628" cy="286.1" r="3.20" fill="#fdfdfd"/>
<text x="628" y="292.0" font-family="'Liberation Sans','Noto Sans CJK SC',sans-serif" font-size="2.6" fill="#b4b8c8" text-anchor="middle" opacity=".8">200</text>
<circle cx="638.4" cy="286.1" r="3.32" fill="#fdfdfd"/>
<text x="638.4" y="292.0" font-family="'Liberation Sans','Noto Sans CJK SC',sans-serif" font-size="2.6" fill="#b4b8c8" text-anchor="middle" opacity=".8">250</text>
<circle cx="648.7" cy="286.1" r="3.43" fill="#fdfdfd"/>
<text x="648.7" y="292.0" font-family="'Liberation Sans','Noto Sans CJK SC',sans-serif" font-size="2.6" fill="#b4b8c8" text-anchor="middle" opacity=".8">300</text>
<circle cx="607.2" cy="297.5" r="2.97" fill="#fdfdfd"/>
<text x="607.2" y="303.4" font-family="'Liberation Sans','Noto Sans CJK SC',sans-serif" font-size="2.6" fill="#b4b8c8" text-anchor="middle" opacity=".8">400</text>
<circle cx="617.6" cy="297.5" r="3.09" fill="#fdfdfd"/>
<text x="617.6" y="303.4" font-family="'Liberation Sans','Noto Sans CJK SC',sans-serif" font-size="2.6" fill="#b4b8c8" text-anchor="middle" opacity=".8">500</text>
<circle cx="628" cy="297.5" r="3.20" fill="#fdfdfd"/>
<text x="628" y="303.4" font-family="'Liberation Sans','Noto Sans CJK SC',sans-serif" font-size="2.6" fill="#b4b8c8" text-anchor="middle" opacity=".8">600</text>
<circle cx="638.4" cy="297.5" r="3.32" fill="#fdfdfd"/>
<text x="638.4" y="303.4" font-family="'Liberation Sans','Noto Sans CJK SC',sans-serif" font-size="2.6" fill="#b4b8c8" text-anchor="middle" opacity=".8">800</text>
<circle cx="648.7" cy="297.5" r="3.43" fill="#fdfdfd"/>
<text x="648.7" y="303.4" font-family="'Liberation Sans','Noto Sans CJK SC',sans-serif" font-size="2.6" fill="#b4b8c8" text-anchor="middle" opacity=".8">1000</text>
</g>
<rect x="601.8" y="306" width="57.4" height=".6" fill="#2c2c2e"/>
<text x="630" y="310.4" font-family="'Liberation Sans','Noto Sans CJK SC',sans-serif" font-size="3.5" fill="#9c9c9c" text-anchor="middle" filter="url(#soft)">图层属性</text>
<path d="M655.4 308.2 l1.2 1.2 -1.2 1.2" stroke="#8a8a8a" stroke-width=".5" fill="none"/>
<text x="604" y="315.2" font-family="'Liberation Sans','Noto Sans CJK SC',sans-serif" font-size="3.6" fill="#c8c8c8" filter="url(#soft)">效果</text><rect x="612" y="313.6" width="42" height=".5" fill="#5b5b5d"/>
<rect x="624" y="316" width="29.6" height="5.6" fill="#4b4a4d" stroke="#5e5e60" stroke-width=".4"/>
<rect x="626.4" y="317.2" width="3.4" height="3.2" fill="#8c8c8e" opacity=".75" filter="url(#soft)"/>
<rect x="632.6" y="317.2" width="3.4" height="3.2" fill="#8c8c8e" opacity=".75" filter="url(#soft)"/>
<rect x="638.4" y="317.2" width="3.4" height="3.2" fill="#8c8c8e" opacity=".75" filter="url(#soft)"/>
<rect x="644.6" y="317.2" width="3.4" height="3.2" fill="#8c8c8e" opacity=".75" filter="url(#soft)"/>
<path d="M650 318 l1.2 1.4 1.2 -1.4" stroke="#999" stroke-width=".5" fill="none"/>
<text x="604" y="325.8" font-family="'Liberation Sans','Noto Sans CJK SC',sans-serif" font-size="3.6" fill="#c8c8c8" filter="url(#soft)">显示颜色</text><rect x="620" y="324.2" width="34" height=".5" fill="#5b5b5d"/>
<rect x="607" y="327.4" width="30.4" height="5.8" fill="#4b4a4d" stroke="#5e5e60" stroke-width=".4"/>
<circle cx="615.6" cy="330.2" r="1.7" fill="#38b0e0"/><path d="M614 330 h3.2 v1.8 h-3.2z" fill="#e04848"/><path d="M615.6 328.4 l1.6 1.6 h-3.2z" fill="#40c860"/>
<text x="619.6" y="331.8" font-family="'Liberation Sans','Noto Sans CJK SC',sans-serif" font-size="3.6" fill="#d0d0d0" filter="url(#soft)">彩色</text>
<path d="M633 329.6 l1.2 1.4 1.2 -1.4" stroke="#999" stroke-width=".5" fill="none"/>
<rect x="601.8" y="340" width="57.4" height=".6" fill="#2c2c2e"/>
<text x="630" y="344.4" font-family="'Liberation Sans','Noto Sans CJK SC',sans-serif" font-size="3.5" fill="#9c9c9c" text-anchor="middle" filter="url(#soft)">工具属性</text>
<path d="M655.6 342.4 l1.2 1.2 -1.2 1.2" stroke="#8a8a8a" stroke-width=".5" fill="none"/>
<rect x="602.2" y="346" width="52.4" height="11.2" fill="#4e4d50"/>
<rect x="602.2" y="346" width="28" height="11.2" fill="#bababa"/>
<path d="M608 347.4 C616 346.8 624 348 630 350.6 C636 353.4 643 353.8 651.4 352 C643 355.6 636 355.8 629.6 353.2 C623 350.4 616 348.6 608 348.2Z" fill="#0c0c0c" filter="url(#soft)"/>
<text x="603" y="349.2" font-family="'Liberation Sans','Noto Sans CJK SC',sans-serif" font-size="3.2" fill="#f4f4f4" filter="url(#soft)">深描铅笔</text>
<path d="M652 353.4 l2 1 -1 1.4 z" fill="#bbb"/>
<text x="607" y="361.6" font-family="'Liberation Sans','Noto Sans CJK SC',sans-serif" font-size="3.6" fill="#dadada" filter="url(#soft)">笔刷尺寸</text><rect x="613" y="363" width="14" height=".6" fill="#6a6a6c"/>
<text x="638" y="362" font-family="'Liberation Sans','Noto Sans CJK SC',sans-serif" font-size="3.4" fill="#d0d0d0" filter="url(#soft)">80.0</text><path d="M645 359.6 v3.4 M643.6 361 l1.4 1.6 1.4-1.6" stroke="#aaa" stroke-width=".5" fill="none"/><rect x="649.4" y="358.8" width="3.6" height="5" fill="#5a5a5c" stroke="#8a8a8a" stroke-width=".4"/>
<rect x="606" y="366.2" width="48" height=".5" fill="#5a5a5c"/>
<text x="607" y="372" font-family="'Liberation Sans','Noto Sans CJK SC',sans-serif" font-size="3.4" fill="#717173" filter="url(#soft)">不透明度</text>
<rect x="606" y="375" width="48" height=".5" fill="#5a5a5c"/>
<text x="607" y="380.8" font-family="'Liberation Sans','Noto Sans CJK SC',sans-serif" font-size="3.6" fill="#dadada" filter="url(#soft)">笔刷浓度</text><rect x="613" y="382.4" width="19" height=".6" fill="#6a6a6c"/>
<text x="640" y="381.4" font-family="'Liberation Sans','Noto Sans CJK SC',sans-serif" font-size="3.4" fill="#d0d0d0" filter="url(#soft)">80</text><path d="M645 379 v3.4 M643.6 380.4 l1.4 1.6 1.4-1.6" stroke="#aaa" stroke-width=".5" fill="none"/><rect x="649.4" y="378.2" width="3.6" height="5" fill="#5a5a5c" stroke="#8a8a8a" stroke-width=".4"/>
<rect x="606" y="385.6" width="48" height=".5" fill="#5a5a5c"/>
<text x="607" y="390.6" font-family="'Liberation Sans','Noto Sans CJK SC',sans-serif" font-size="3.6" fill="#dadada" filter="url(#soft)">手颤修正</text><rect x="613" y="392.4" width="10" height=".6" fill="#5e5e60"/>
<path d="M643.4 388.6 v3 h2.6 M644.6 389 h2" stroke="#aaa" stroke-width=".5" fill="none"/>
<rect x="601.8" y="417.4" width="57.4" height="8.2" fill="#49484b"/>
<rect x="648.4" y="419.6" width="3" height="4" fill="#8a8a8c"/><path d="M654 420 l2.4 3.4" stroke="#aaa" stroke-width="1"/>
<rect x="600.2" y="425.4" width="59.4" height=".8" fill="#2b2b2d"/>
<!-- right dock -->
<text x="691" y="115.2" font-family="'Liberation Sans','Noto Sans CJK SC',sans-serif" font-size="4.2" fill="#969696" text-anchor="middle" filter="url(#soft)">工具</text>
<rect x="669" y="125.6" width="8" height="8" fill="#a9c93a"/>
<g stroke="#c4c4c4" stroke-width=".75" fill="none" filter="url(#soft2)" opacity=".72">
<path transform="translate(664.6 121.3)" d="M-2 -2 h4 v4 h-4z"/>
<path transform="translate(672.9 121.3)" d="M0 -2.4 l2.4 2.4 -2.4 2.4 -2.4 -2.4z M0 -1 v2 M-1 0 h2"/>
<path transform="translate(680.9 121.3)" d="M-1 -1 a1.8 1.8 0 1 0 .1 0 M1 1 l1.6 1.6"/>
<path transform="translate(688.9 121.3)" d="M0 -2.6 v5.2 M-2.6 0 h5.2 M-1 -1.6 l1 -1 1 1"/>
<path transform="translate(696.9 121.3)" d="M-2 0 a2 2.2 0 1 0 4 0 a2 2.2 0 1 0 -4 0"/>
<path transform="translate(704.9 121.3)" d="M-2 2 l4 -4 M0 -2 l2 0 0 2"/>
<path transform="translate(712.4 121.3)" d="M-2 2.4 l3.6 -4.4 1 .8 -3.6 4.4z"/>
<path transform="translate(664.6 129.5)" d="M-2.2 2.2 l3.4 -4 1.2 1 -3.4 4z"/>
<path transform="translate(672.9 129.5)" d="M-2 -2 h3 v2 h1.6 v2.4 h-4.6z" stroke="#f4f8e0"/>
<path transform="translate(680.9 129.5)" d="M-2 2 l3 -3 M0 -2.4 l2.4 2.4"/>
<path transform="translate(688.9 129.5)" d="M-2 1.6 h4 M0 -2.4 v4 M-1.4 -.6 h2.8"/>
<path transform="translate(696.9 129.5)" d="M-2.2 1.8 h4.4 M-1.4 -.4 h2.8 l-.6 -1.8 h-1.6z"/>
<path transform="translate(704.9 129.5)" d="M0 -2.4 l2 2.4 -2 2.4 -2 -2.4z"/>
<path transform="translate(712.4 129.5)" d="M-1.6 2.2 v-3 h3.2 v3 M-.6 -.8 v-1.6 h1.2 v1.6"/>
<path transform="translate(664.6 137.4)" d="M-2.4 0 a2.4 1.6 0 1 0 4.8 0 a2.4 1.6 0 1 0 -4.8 0"/>
<path transform="translate(672.9 137.4)" d="M-2 -2 h4 v4 h-4z M-2 0 h4"/>
<path transform="translate(680.9 137.4)" d="M-2 2 l4 -4"/>
<path transform="translate(688.9 137.4)" d="M-2 -2 h4 v4 h-4z M0 0 l2 2"/>
<path transform="translate(696.9 137.4)" d="M-1.6 -2.4 v4.8 l3.4 -4.8"/>
<path transform="translate(704.9 137.4)" d="M-2 2.4 l2 -4.8 2 4.8 M-1.2 .8 h2.4"/>
<path transform="translate(712.4 137.4)" d="M-2 0 a2 2 0 1 0 4 0 a2 2 0 1 0 -4 0"/>
</g>
<rect x="661.6" y="141.4" width="18" height="7.2" rx=".8" fill="#020203" stroke="#8f8fc0" stroke-width=".9"/>
<rect x="682.4" y="141.4" width="18.6" height="7.2" fill="#fcfcfc"/>
<defs><pattern id="chk" x="703.4" y="141.4" width="2.4" height="2.4" patternUnits="userSpaceOnUse"><rect width="2.4" height="2.4" fill="#f4f4f4"/><rect width="1.2" height="1.2" fill="#a8a8a8"/><rect x="1.2" y="1.2" width="1.2" height="1.2" fill="#a8a8a8"/></pattern></defs>
<rect x="703.4" y="141.4" width="11.6" height="7.2" fill="url(#chk)"/>
<rect x="660.2" y="150.6" width="54.8" height=".6" fill="#2c2c2e"/>
<text x="692.4" y="155.2" font-family="'Liberation Sans','Noto Sans CJK SC',sans-serif" font-size="3.2" fill="#9c9c9c" text-anchor="middle" filter="url(#soft)">辅助工具</text>
<rect x="661" y="156.8" width="19.4" height="7" fill="#6875a0"/>
<rect x="681.6" y="156.8" width="21.4" height="7" fill="#4a494c"/>
<rect x="704" y="156.8" width="11" height="7" fill="#4a494c"/>
<path d="M663.4 162.2 l2.4 -3.6 .8 .6 -2.4 3.6z" fill="#e8ecf8"/>
<text x="667.4" y="162.2" font-family="'Liberation Sans','Noto Sans CJK SC',sans-serif" font-size="3.8" fill="#e4e8f4" filter="url(#soft)" textLength="11.6">深描铅笔</text>
<path d="M684 162.2 l2.4 -3.6 .8 .6 -2.4 3.6z" fill="#d0d0d0"/>
<text x="688.4" y="162.2" font-family="'Liberation Sans','Noto Sans CJK SC',sans-serif" font-size="3.8" fill="#dcdcdc" filter="url(#soft)" textLength="12.6">粉笔蜡笔</text>
<rect x="705" y="157.6" width="5.6" height="5.6" rx=".6" fill="#f2cc1c"/><rect x="706.2" y="159.4" width="3" height="2.6" fill="#fbe98a"/><rect x="706" y="158.2" width="1.6" height="1.6" fill="#fff3b0"/>
<text x="711.6" y="162.2" font-family="'Liberation Sans','Noto Sans CJK SC',sans-serif" font-size="3.8" fill="#d0d0d0" filter="url(#soft)">厚涂</text>
<rect x="660.6" y="164.4" width="54.4" height="98" fill="#3a393c"/>
<rect x="660.6" y="171.6" width="54.4" height=".4" fill="#2f2f31"/>
<path d="M672.0 169.2 C674.5 168.0 677.1 166.7 679.1 167.2 C681.4 167.8 682.5 169.5 684.9 169.3 C686.6 169.1 688.0 168.0 689.0 167.2 C688.0 168.4 686.6 169.9 684.6 170.4 C682.2 170.5 680.8 169.0 678.8 168.2 C677.1 167.5 674.5 168.4 672.0 169.2Z" fill="#fbfbfb" filter="url(#soft)"/>
<text x="717" y="169.9" font-family="'Liberation Sans','Noto Sans CJK SC',sans-serif" font-size="4.1" fill="#e8e8e8" text-anchor="end" filter="url(#soft)">二木笔</text>
<rect x="660.6" y="178.6" width="54.4" height=".4" fill="#2f2f31"/>
<path d="M667.5 176.2 C671.2 175.0 674.9 173.7 677.8 174.2 C681.0 174.8 682.7 176.5 686.1 176.3 C688.6 176.1 690.5 175.0 692.0 174.2 C690.5 175.4 688.6 176.9 685.6 177.5 C682.2 177.6 680.2 176.1 677.3 175.3 C674.9 174.6 671.2 175.4 667.5 176.2Z" fill="#fbfbfb" filter="url(#soft)"/>
<text x="717" y="176.9" font-family="'Liberation Sans','Noto Sans CJK SC',sans-serif" font-size="4.1" fill="#e8e8e8" text-anchor="end" filter="url(#soft)">浓铅笔</text>
<rect x="660.6" y="185.6" width="54.4" height=".4" fill="#2f2f31"/>
<path d="M667.5 183.2 C671.2 182.0 674.9 180.7 677.8 181.2 C681.0 181.8 682.7 183.5 686.1 183.3 C688.6 183.1 690.5 182.0 692.0 181.2 C690.5 182.4 688.6 184.5 685.6 185.7 C682.2 185.8 680.2 184.3 677.3 183.4 C674.9 182.3 671.2 182.7 667.5 183.2Z" fill="#fbfbfb" filter="url(#soft)"/>
<text x="717" y="183.9" font-family="'Liberation Sans','Noto Sans CJK SC',sans-serif" font-size="4.1" fill="#e8e8e8" text-anchor="end" filter="url(#soft)">メ太郎</text>
<rect x="660.6" y="192.6" width="54.4" height=".4" fill="#2f2f31"/>
<path d="M671.5 190.2 C674.1 189.0 676.8 187.7 678.9 188.2 C681.1 188.8 682.4 190.5 684.8 190.3 C686.5 190.1 688.0 189.0 689.0 188.2 C688.0 189.4 686.5 190.9 684.5 191.5 C682.0 191.6 680.6 190.1 678.5 189.3 C676.8 188.6 674.1 189.4 671.5 190.2Z" fill="#fbfbfb" filter="url(#soft)"/>
<text x="717" y="190.9" font-family="'Liberation Sans','Noto Sans CJK SC',sans-serif" font-size="4.1" fill="#e8e8e8" text-anchor="end" filter="url(#soft)">リ太郎</text>
<rect x="660.6" y="199.6" width="54.4" height=".4" fill="#2f2f31"/>
<path d="M664.0 197.2 C668.6 196.0 673.1 194.7 676.8 195.2 C680.8 195.8 682.9 197.5 687.2 197.3 C690.2 197.1 692.7 196.0 694.5 195.2 C692.7 196.4 690.2 198.5 686.6 199.6 C682.3 199.7 679.9 198.2 676.2 197.3 C673.1 196.2 668.6 196.6 664.0 197.2Z" fill="#fbfbfb" filter="url(#soft)"/>
<text x="717" y="197.9" font-family="'Liberation Sans','Noto Sans CJK SC',sans-serif" font-size="4.1" fill="#e8e8e8" text-anchor="end" filter="url(#soft)">自然铅</text>
<rect x="660.6" y="206.6" width="54.4" height=".4" fill="#2f2f31"/>
<path d="M670.0 204.2 C673.0 203.0 676.0 201.7 678.4 202.2 C681.0 202.8 682.4 204.5 685.2 204.3 C687.2 204.1 688.8 203.0 690.0 202.2 C688.8 203.4 687.2 205.1 684.8 205.8 C682.0 205.9 680.4 204.4 678.0 203.6 C676.0 202.7 673.0 203.5 670.0 204.2Z" fill="#fbfbfb" filter="url(#soft)"/>
<text x="717" y="204.9" font-family="'Liberation Sans','Noto Sans CJK SC',sans-serif" font-size="4.1" fill="#e8e8e8" text-anchor="end" filter="url(#soft)">粗铅笔</text>
<rect x="660.6" y="213.6" width="54.4" height=".4" fill="#2f2f31"/>
<path d="M671.0 211.2 C674.0 210.0 677.0 208.7 679.4 209.2 C682.0 209.8 683.4 211.5 686.2 211.3 C688.2 211.1 689.8 210.0 691.0 209.2 C689.8 210.4 688.2 212.0 685.8 212.6 C683.0 212.7 681.4 211.2 679.0 210.4 C677.0 209.6 674.0 210.4 671.0 211.2Z" fill="#fbfbfb" filter="url(#soft)"/>
<text x="717" y="211.9" font-family="'Liberation Sans','Noto Sans CJK SC',sans-serif" font-size="4.1" fill="#e8e8e8" text-anchor="end" filter="url(#soft)">现实铅</text>
<rect x="660.6" y="220.6" width="54.4" height=".4" fill="#2f2f31"/>
<path d="M672.0 218.2 C674.4 217.0 676.8 215.7 678.7 216.2 C680.8 216.8 681.9 218.5 684.2 218.3 C685.8 218.1 687.0 217.0 688.0 216.2 C687.0 217.4 685.8 219.0 683.8 219.7 C681.6 219.8 680.3 218.3 678.4 217.5 C676.8 216.7 674.4 217.5 672.0 218.2Z" fill="#fbfbfb" filter="url(#soft)"/>
<text x="717" y="218.9" font-family="'Liberation Sans','Noto Sans CJK SC',sans-serif" font-size="4.1" fill="#e8e8e8" text-anchor="end" filter="url(#soft)">点线笔刷</text>
<rect x="660.6" y="227.6" width="54.4" height=".4" fill="#2f2f31"/>
<path d="M674.0 225.2 C676.5 224.0 679.1 222.7 681.1 223.2 C683.4 223.8 684.5 225.5 686.9 225.3 C688.6 225.1 690.0 224.0 691.0 223.2 C690.0 224.4 688.6 225.9 686.6 226.4 C684.2 226.5 682.8 225.0 680.8 224.2 C679.1 223.5 676.5 224.4 674.0 225.2Z" fill="#fbfbfb" filter="url(#soft)"/>
<text x="717" y="225.9" font-family="'Liberation Sans','Noto Sans CJK SC',sans-serif" font-size="4.1" fill="#e8e8e8" text-anchor="end" filter="url(#soft)">粉笔</text>
<rect x="660.6" y="227.6" width="54.4" height="7" fill="#626f9a"/>
<rect x="660.6" y="234.6" width="54.4" height=".4" fill="#2f2f31"/>
<path d="M664.0 232.2 C668.5 231.0 673.0 229.7 676.6 230.2 C680.5 230.8 682.6 232.5 686.8 232.3 C689.8 232.1 692.2 231.0 694.0 230.2 C692.2 231.4 689.8 233.3 686.2 234.2 C682.0 234.3 679.6 232.8 676.0 231.9 C673.0 231.0 668.5 231.6 664.0 232.2Z" fill="#fbfbfb" filter="url(#soft)"/>
<text x="717" y="232.9" font-family="'Liberation Sans','Noto Sans CJK SC',sans-serif" font-size="4.1" fill="#e8e8e8" text-anchor="end" filter="url(#soft)">深描铅笔</text>
<rect x="660.6" y="241.6" width="54.4" height=".4" fill="#2f2f31"/>
<path d="M668.0 239.2 C671.6 238.0 675.2 236.7 678.1 237.2 C681.2 237.8 682.9 239.5 686.2 239.3 C688.6 239.1 690.6 238.0 692.0 237.2 C690.6 238.4 688.6 239.9 685.8 240.4 C682.4 240.5 680.5 239.0 677.6 238.2 C675.2 237.5 671.6 238.4 668.0 239.2Z" fill="#fbfbfb" filter="url(#soft)"/>
<text x="717" y="239.9" font-family="'Liberation Sans','Noto Sans CJK SC',sans-serif" font-size="4.1" fill="#e8e8e8" text-anchor="end" filter="url(#soft)">铅笔</text>
<rect x="660.6" y="248.6" width="54.4" height=".4" fill="#2f2f31"/>
<path d="M676.0 246.2 C678.1 245.0 680.2 243.7 681.9 244.2 C683.7 244.8 684.7 246.5 686.6 246.3 C688.0 246.1 689.2 245.0 690.0 244.2 C689.2 245.4 688.0 247.1 686.4 247.9 C684.4 248.0 683.3 246.5 681.6 245.6 C680.2 244.8 678.1 245.5 676.0 246.2Z" fill="#fbfbfb" filter="url(#soft)"/>
<text x="717" y="246.9" font-family="'Liberation Sans','Noto Sans CJK SC',sans-serif" font-size="4.1" fill="#e8e8e8" text-anchor="end" filter="url(#soft)">硬·中</text>
<rect x="660.6" y="255.6" width="54.4" height=".4" fill="#2f2f31"/>
<path d="M674.0 253.2 C676.9 252.0 679.7 250.7 682.0 251.2 C684.5 251.8 685.8 253.5 688.4 253.3 C690.3 253.1 691.9 252.0 693.0 251.2 C691.9 252.4 690.3 254.0 688.1 254.7 C685.4 254.8 683.9 253.3 681.6 252.5 C679.7 251.7 676.9 252.5 674.0 253.2Z" fill="#050505" filter="url(#soft)"/>
<text x="717" y="253.9" font-family="'Liberation Sans','Noto Sans CJK SC',sans-serif" font-size="4.1" fill="#e8e8e8" text-anchor="end" filter="url(#soft)">涂抹铅笔R</text>
<rect x="660.6" y="262.6" width="54.4" height=".4" fill="#2f2f31"/>
<path d="M665.0 260.2 C669.4 259.0 673.7 257.7 677.2 258.2 C681.0 258.8 683.0 260.5 687.0 260.3 C689.9 260.1 692.3 259.0 694.0 258.2 C692.3 259.4 689.9 261.2 686.5 262.0 C682.4 262.1 680.1 260.6 676.6 259.7 C673.7 258.9 669.4 259.5 665.0 260.2Z" fill="#fbfbfb" filter="url(#soft)"/>
<text x="717" y="260.9" font-family="'Liberation Sans','Noto Sans CJK SC',sans-serif" font-size="4.1" fill="#e8e8e8" text-anchor="end" filter="url(#soft)">浓淡铅笔</text>
<rect x="660.6" y="262.2" width="54.4" height="7.6" fill="#48474a"/>
<rect x="705" y="263.8" width="3.6" height="4.2" fill="none" stroke="#b0b0b0" stroke-width=".6"/><path d="M706.8 263.8 v4.2" stroke="#b0b0b0" stroke-width=".5"/><rect x="710.6" y="264" width="3" height="4" fill="#9a9a9c"/>
<rect x="660.2" y="269.8" width="54.8" height=".6" fill="#2c2c2e"/>
<text x="691" y="274.2" font-family="'Liberation Sans','Noto Sans CJK SC',sans-serif" font-size="3.8" fill="#a4a4a4" text-anchor="middle" filter="url(#soft)">图层</text>
<rect x="661.2" y="275.2" width="29" height="5" fill="#4d4d4f" stroke="#5c5c5e" stroke-width=".4"/>
<rect x="662.4" y="276.2" width="3.4" height="3" fill="#7e7e80"/><rect x="667" y="276.2" width="3.4" height="3" fill="#6a6a6c"/>
<text x="675" y="279.2" font-family="'Liberation Sans','Noto Sans CJK SC',sans-serif" font-size="3.6" fill="#d0d0d0" filter="url(#soft)">正常</text><path d="M686 277 l1.2 1.4 1.2 -1.4" stroke="#999" stroke-width=".5" fill="none"/>
<rect x="693" y="276" width="18.4" height="3" fill="#d2d2d2"/><rect x="693" y="276" width="18.4" height="1" fill="#eee"/>
<g fill="#bcbcbc" filter="url(#soft)">
<rect x="663.4" y="282.4" width="3.6" height="3.8" opacity=".7"/>
<rect x="669" y="282.4" width="3.6" height="3.8" opacity=".7"/>
<rect x="674.6" y="282.4" width="3.6" height="3.8" opacity=".7"/>
<rect x="680.4" y="282.4" width="3.6" height="3.8" opacity=".7"/>
<rect x="686.2" y="282.4" width="3.6" height="3.8" opacity=".7"/>
<rect x="692" y="282.4" width="3.6" height="3.8" opacity=".7"/>
<rect x="704" y="282.4" width="3.2" height="3.6" opacity=".3"/><rect x="709" y="282.4" width="3.2" height="3.6" opacity=".3"/>
<rect x="661.6" y="288.8" width="3.6" height="4.4" opacity=".35"/>
<rect x="677" y="289.4" width="3.4" height="3.6" opacity=".65"/>
<rect x="682.4" y="289.4" width="3.4" height="3.6" opacity=".65"/>
<rect x="688" y="289.4" width="3.4" height="3.6" opacity=".65"/>
<rect x="693.6" y="289.4" width="3.4" height="3.6" opacity=".65"/>
<rect x="699" y="289.4" width="3.4" height="3.6" opacity=".65"/>
</g>
<rect x="705.6" y="288.6" width="5" height="5" fill="#e6e6e6"/><rect x="707" y="290" width="2.2" height="2.2" fill="#3a3a3c"/>
<circle cx="714.6" cy="284" r="1.4" fill="#3a7ae0"/>
<rect x="660.6" y="294.2" width="54.4" height="45.6" fill="#3a393c"/>
<rect x="672" y="294.4" width="43" height="12" fill="#5b6a98"/>
<rect x="660.6" y="306.4" width="54.4" height=".5" fill="#2c2c2e"/><rect x="660.6" y="318.8" width="54.4" height=".5" fill="#2c2c2e"/><rect x="660.6" y="327" width="54.4" height=".5" fill="#2c2c2e"/><rect x="660.6" y="339.6" width="54.4" height=".5" fill="#2c2c2e"/>
<rect x="667.2" y="294.4" width=".5" height="45" fill="#2c2c2e"/><rect x="672" y="294.4" width=".5" height="45" fill="#2c2c2e"/>
<rect x="674" y="296" width="14.2" height="9" fill="#fdfdfd"/><rect x="674" y="308" width="14.2" height="9" fill="#fdfdfd"/><rect x="674" y="329" width="14.2" height="9" fill="#fdfdfd"/>
<path d="M662 300.4 q1.8 -1.8 3.6 0 q-1.8 1.8 -3.6 0z" fill="#cfcfcf"/><circle cx="663.8" cy="300.4" r=".6" fill="#3a393c"/>
<path d="M662 312.4 q1.8 -1.8 3.6 0 q-1.8 1.8 -3.6 0z" fill="#cfcfcf"/><circle cx="663.8" cy="312.4" r=".6" fill="#3a393c"/>
<path d="M662 333.2 q1.8 -1.8 3.6 0 q-1.8 1.8 -3.6 0z" fill="#cfcfcf"/><circle cx="663.8" cy="333.2" r=".6" fill="#3a393c"/>
<path d="M668.6 302.4 l2 -3 .7 .5 -2 3z" fill="#e0e0e0"/>
<text x="690.4" y="299.6" font-family="'Liberation Sans','Noto Sans CJK SC',sans-serif" font-size="3.4" fill="#e4e8f4" filter="url(#soft)">100 %正常</text>
<text x="690.4" y="304.4" font-family="'Liberation Sans','Noto Sans CJK SC',sans-serif" font-size="3.4" fill="#e4e8f4" filter="url(#soft)" textLength="23">图层 11 的复制 2</text>
<text x="690.4" y="311.6" font-family="'Liberation Sans','Noto Sans CJK SC',sans-serif" font-size="3.4" fill="#d0d0d0" filter="url(#soft)">77 %正常</text>
<text x="690.4" y="316.4" font-family="'Liberation Sans','Noto Sans CJK SC',sans-serif" font-size="3.4" fill="#d0d0d0" filter="url(#soft)" textLength="23">图层 11 的复制</text>
<path d="M673.6 322.4 l1 1 1-1" stroke="#aaa" stroke-width=".5" fill="none"/><rect x="676.6" y="321" width="4.4" height="3.6" fill="#b4b4b4"/>
<text x="685.6" y="322.6" font-family="'Liberation Sans','Noto Sans CJK SC',sans-serif" font-size="3.2" fill="#d0d0d0" filter="url(#soft)">30 %通过</text><text x="685.6" y="326.2" font-family="'Liberation Sans','Noto Sans CJK SC',sans-serif" font-size="3.2" fill="#d0d0d0" filter="url(#soft)">1</text>
<rect x="692.4" y="329.2" width="3.6" height="4.2" fill="#fff"/>
<text x="690.4" y="337.6" font-family="'Liberation Sans','Noto Sans CJK SC',sans-serif" font-size="3.4" fill="#d0d0d0" filter="url(#soft)">用纸</text>
<defs><radialGradient id="vg" cx=".5" cy=".5" r=".5"><stop offset="0" stop-color="#131315" stop-opacity=".95"/><stop offset=".6" stop-color="#161618" stop-opacity=".6"/><stop offset="1" stop-color="#161618" stop-opacity="0"/></radialGradient></defs>
<ellipse cx="717" cy="321" rx="10.5" ry="28" fill="url(#vg)"/>
<!-- head sketch -->
<g fill="none" stroke="#4a4a4a" stroke-width="4.2" stroke-linecap="round" stroke-linejoin="round" opacity=".8" filter="url(#soft3)">
<g transform="translate(80 155) scale(.1678)">
<path d="M70 190C90 150 130 120 170 105C210 90 280 80 345 68C420 70 500 95 545 140C580 190 600 260 620 320C635 350 640 370 635 390"/>
<path d="M170 105C185 120 200 150 210 175C225 150 240 120 245 100M150 130C170 150 190 170 205 195"/>
<path d="M215 200C260 190 330 200 380 230C410 250 430 280 440 300M300 120C340 100 400 100 440 110M290 140C350 150 420 170 470 200M380 200C400 215 420 230 435 245"/>
<path d="M215 230C250 260 270 290 280 330C290 380 320 420 340 440M350 270C380 310 400 350 420 390C440 420 470 440 490 450M400 290C430 320 450 350 470 370"/>
<path d="M440 260C480 300 520 350 540 400C550 430 560 460 565 490M520 250C560 290 590 340 600 390M590 320C600 340 610 330 612 322"/>
<path d="M70 190C60 220 70 250 80 270C60 290 45 320 50 350C40 380 50 410 65 430C60 460 70 490 85 510C80 530 75 540 70 545"/>
<path d="M110 200C90 240 85 270 95 300C80 330 80 370 95 400M160 250C130 280 110 310 110 340M150 270C155 300 155 330 150 350"/>
<path d="M150 350C140 390 120 440 100 480C105 500 110 510 105 520C115 525 130 520 140 530C135 545 140 560 150 570C160 580 170 590 175 596"/>
<path d="M120 345C135 355 150 370 160 385M125 360C135 372 148 382 158 388M215 425C240 430 270 445 290 460M225 435C245 450 265 460 280 462M200 400C230 400 260 410 290 430"/>
<path d="M430 470C450 440 490 420 520 425C530 450 520 480 490 500C470 515 450 520 440 530M445 470C460 455 480 450 495 455M455 490C470 480 485 478 495 470M440 530C420 560 400 585 385 596"/>
<path d="M250 110C300 105 360 110 410 125M320 90C380 88 450 100 500 125M470 130C510 160 540 200 560 250M240 200C280 220 320 260 350 300M260 240C300 280 330 330 350 380M330 230C370 260 410 300 440 340M480 210C520 250 550 300 570 350M100 240C85 280 80 320 90 350M130 230C115 260 105 290 105 320M75 300C65 340 65 380 75 410M180 110C200 130 210 150 215 170M545 400C550 440 548 480 540 520M575 420C580 460 575 500 565 540M610 400C615 440 612 480 605 520M500 470C498 510 490 550 480 590M300 160C340 170 380 190 410 215"/>
<path d="M215 425C240 428 270 442 292 460M122 345C137 355 152 370 162 386M232 440C248 452 266 460 282 462" stroke="#2a2a2a" stroke-width="6.5"/>
<path d="M635 390C625 370 615 350 612 322M600 390C605 430 600 470 590 510C595 530 600 545 600 550M565 490C560 520 555 550 545 580M520 480C515 520 505 560 495 596M480 540C470 560 465 580 460 596"/>
</g>
<g transform="translate(80 235) scale(.1678)">
<path d="M120 55C125 70 135 80 130 90M135 92C155 100 175 110 190 120M130 100C120 130 130 160 160 180C175 188 195 188 215 185C260 165 320 145 380 125C400 100 415 70 425 45"/>
<path d="M215 190C220 230 215 290 205 365M185 252L215 252M230 200C240 225 242 250 238 270"/>
<path d="M425 45C400 100 380 150 360 210C350 260 345 290 330 310C300 345 260 375 240 395C235 405 232 412 235 415"/>
<path d="M460 240C480 280 530 340 580 390C600 410 620 425 638 435"/>
<path d="M470 60C450 100 440 150 430 200M500 50C480 110 460 170 450 230C440 250 430 258 420 258M520 60C510 100 500 130 490 160M530 90C520 130 510 170 500 210C498 230 500 240 502 245M560 20C550 60 540 110 530 150C535 160 540 165 545 170M580 10C585 40 590 60 600 75M70 40C75 30 80 15 85 0"/>
</g>
</g>
<!-- red mannequin -->
<g fill="none" stroke="#bc5e50" stroke-width="3.2" stroke-linecap="round" stroke-linejoin="round" opacity=".66" filter="url(#soft3)">
<g transform="translate(215 180) scale(.2)">
<path d="M165 100C160 70 185 45 225 45C260 48 280 75 275 110C272 140 260 160 240 170C215 170 195 160 185 140C172 125 167 115 165 100Z"/>
<path d="M225 45C240 70 250 100 255 130M200 135C225 130 255 120 275 110M185 140C190 170 200 195 215 205C235 200 250 185 260 160M200 180C200 200 205 215 210 225M240 195C245 210 248 220 250 225"/>
<path d="M275 90C300 95 340 100 380 115C410 125 430 135 440 145C445 160 440 175 425 180C395 200 360 215 330 230M285 125C310 140 340 150 370 155C390 150 410 145 425 150C420 160 420 170 425 180"/>
<path d="M330 230C320 200 310 185 300 180C280 185 260 200 245 225M210 215C180 215 140 225 105 245C95 280 90 330 90 380C90 400 95 415 100 425"/>
<path d="M245 225C250 270 255 320 265 370C280 410 300 430 310 450M300 180C305 230 305 290 300 340C300 380 305 410 315 440"/>
<path d="M105 245C120 280 135 310 145 330C160 370 180 420 195 455C200 470 200 480 195 490M130 230C135 260 140 290 145 330C140 360 135 390 140 415"/>
<path d="M100 425C110 430 125 425 140 415C140 420 138 428 135 432M100 425C115 460 150 495 185 520C200 530 215 535 225 530"/>
<path d="M195 360C220 345 250 330 270 315M195 440C230 430 270 410 300 395M195 490C220 500 250 500 270 490C290 480 310 465 320 450M195 490C200 510 205 520 215 525"/>
<path d="M185 540C185 560 188 580 190 600M215 525C230 540 235 570 232 600M320 450C335 500 345 550 350 600M290 500C285 540 280 570 278 600"/>
</g>
<g id="legs" transform="translate(215 300) scale(.2)">
<path d="M190 0C192 50 200 120 210 185C215 210 218 230 215 240M232 0C230 60 228 130 230 185M278 0C275 60 270 120 268 180"/>
<path d="M210 185C225 195 250 195 268 180C270 190 270 198 270 205M215 215C232 225 255 222 270 205"/>
<path d="M215 240C200 290 195 340 200 380C205 410 210 425 212 435M270 210C275 250 270 300 258 350C250 390 245 415 245 430M232 240C235 300 238 370 240 430M195 430C210 438 230 438 248 430"/>
<path d="M195 430C188 450 185 465 195 475C205 490 210 510 212 530C215 550 225 562 240 565C255 568 270 562 275 555C270 520 258 480 248 430M212 545C230 555 255 555 275 548"/>
<path d="M300 0C310 50 318 110 325 155M355 0C365 40 375 90 382 140C385 160 385 170 383 180M325 155C340 165 365 160 382 145M318 185C335 195 365 190 383 175M325 155C322 165 320 175 318 185"/>
<path d="M318 185C305 230 290 290 278 350C275 360 272 368 272 372M383 180C370 230 345 290 310 340C305 350 302 360 300 368M350 190C335 240 315 300 298 350M272 372C282 378 295 378 305 372"/>
<path d="M272 372C262 390 255 400 258 410C275 430 300 450 330 460C345 465 358 465 362 460C350 430 330 400 305 372M280 395C295 410 320 440 345 455"/>
</g>
</g>
<!-- clothed figure -->
<g fill="none" stroke="#e8e8e8" stroke-width="3" stroke-linecap="round" stroke-linejoin="round" filter="url(#soft3)">
<g transform="translate(340 180) scale(.2)">
<path d="M140 215C120 235 105 265 100 300C95 350 100 400 110 440C115 470 125 495 135 515M118 290C115 330 118 380 128 420M240 280C245 350 240 420 235 480M200 520C230 530 270 530 300 520M200 520C195 550 195 580 198 600M300 520C320 550 335 580 340 600"/>
</g>
<g transform="translate(341 297) scale(.2)">
<path d="M190 0C192 50 200 120 210 185C215 210 218 230 215 240M278 0C275 60 270 120 268 180M215 240C200 290 195 340 200 380C205 410 210 425 212 435M270 210C275 250 270 300 258 350C250 390 245 415 245 430"/>
<path d="M195 430C188 450 185 465 195 475C205 490 210 510 212 530C215 550 225 562 240 565C255 568 270 562 275 555C270 520 258 480 248 430"/>
<path d="M300 0C310 50 318 110 325 155M355 0C365 40 375 90 382 140C385 160 385 170 383 180M318 185C305 230 290 290 278 350C275 360 272 368 272 372M383 180C370 230 345 290 310 340C305 350 302 360 300 368"/>
<path d="M272 372C262 390 255 400 258 410C275 430 300 450 330 460C345 465 358 465 362 460C350 430 330 400 305 372"/>
</g>
</g>
<g fill="none" stroke="#3a3a3a" stroke-linecap="round" stroke-linejoin="round" opacity=".8" filter="url(#soft3)">
<g transform="translate(355 180) scale(.1119)" stroke-width="6.4">
<path d="M100 210C95 150 130 95 200 85C260 80 310 110 325 150C335 175 335 200 330 215M100 210C100 250 115 280 140 300C150 310 155 315 150 325"/>
<path d="M130 120C115 160 110 200 120 240M215 100C190 140 180 190 185 240M215 100C250 110 290 140 310 180M240 120C275 140 300 170 310 200M215 160C215 200 225 230 240 245M150 250C165 265 180 275 190 285"/>
<path d="M240 245C250 275 265 300 285 315C300 310 315 290 320 265C325 245 328 230 330 215M300 235C305 245 305 255 300 262"/>
<path d="M225 235L252 240M288 216L315 210" stroke="#222" stroke-width="8"/>
<path d="M150 325C170 345 200 360 240 360C270 355 290 345 300 335M185 330C185 345 190 355 195 360M170 385C200 395 240 395 275 375M195 430C225 440 255 430 275 410"/>
<path d="M150 325C130 350 120 380 118 420C120 460 130 500 140 536M185 440C195 470 205 500 215 536"/>
<path d="M300 335C330 360 360 400 385 450C400 490 412 520 418 536M330 330C370 370 400 420 420 480C428 510 432 525 435 536"/>
<path d="M385 185C420 180 480 185 540 200C590 215 625 235 640 260C655 290 650 310 635 318C590 335 540 350 500 365C470 380 450 395 440 410C435 440 430 470 428 500"/>
<path d="M385 185C390 210 395 240 400 265C380 280 350 300 330 315M440 190C455 230 465 270 470 305C520 300 580 305 635 318M520 240C560 260 600 285 630 300"/>
</g>
<g transform="translate(340 180) scale(.2)" stroke-width="3.6">
<path d="M153 300C170 350 185 400 192 440C195 470 192 495 185 510C190 515 195 515 200 512M309 300C322 360 340 420 355 480C360 505 365 525 368 540M318 300C330 380 345 460 355 500M300 475C320 480 340 485 355 488"/>
</g>
</g>
<!-- red signature -->
<g fill="none" stroke="#b4241a" stroke-width=".85" stroke-linecap="round" filter="url(#soft)">
<path d="M623.4 478.9 C650 478.2 690 478.3 714.6 478.4M640 479.6 C670 479 700 479.2 714 479.4M625.6 492.3 C660 491.6 690 491.8 713 492M633.7 473.6 C633.3 482 633.5 490 633.3 496M708 475.8 C707.8 483 708 489 707.8 494M709.8 476.4 C709.6 483 709.8 488 709.6 493"/>
</g>
<g font-family="'Liberation Sans',sans-serif" font-style="italic" fill="#b8261c" filter="url(#soft)">
<text x="637" y="490" font-size="11.6" textLength="20" lengthAdjust="spacingAndGlyphs">C</text>
<text x="658.4" y="490.2" font-size="8.4" textLength="46" lengthAdjust="spacingAndGlyphs">ervas</text>
</g>
</g>
</svg>

<!-- PLAYER CHROME ICONS -->
<svg class="abs" id="chrome" viewBox="0 0 715 600">
<g fill="none" stroke="#e6e6e6" stroke-width="1.7" stroke-linecap="round" stroke-linejoin="round">
<!-- share -->
<g stroke-width="1.9"><circle cx="398.3" cy="34.2" r="2.6"/><circle cx="409.6" cy="28.9" r="2.6"/><circle cx="409.6" cy="39.6" r="2.6"/>
<path d="M400.8 33 L407.1 30.1 M400.8 35.4 L407.1 38.4"/></g>
<!-- download -->
<path d="M449.3 25 V37.4 M443.2 31.9 L449.3 37.8 L455.4 31.9 M441.9 36.2 V39.6 Q441.9 41.8 444.1 41.8 H454.7 Q456.9 41.8 456.9 39.6 V36.2" stroke-width="1.8"/>
<!-- phone -->
<rect x="485.6" y="24.2" width="14.6" height="20.2" rx="3"/>
<path d="M490.6 40.2 H495.4"/>
</g><g fill="none" stroke="#f2f2f2" stroke-width="2.1" stroke-linecap="round" stroke-linejoin="round">
<!-- pip -->
<path d="M594.2 41.6 H592.6 Q588.8 41.6 588.8 37.8 V29 Q588.8 25.2 592.6 25.2 H604 Q607.8 25.2 607.8 29 V32.4"/>
<rect x="598.4" y="36.6" width="9.6" height="6.6" rx="1.6"/>
<path d="M593 28.6 L597.8 33.4 M598.2 29.4 V33.8 H593.8"/>
<!-- crop -->
<path d="M650.4 23.6 V44.6 M650.4 27.1 H637 V40.7 H650.4 M632.4 33.9 H637"/>
</g>
<g fill="#dcdcdc"><circle cx="530" cy="33.9" r="1.75"/><circle cx="537.4" cy="33.9" r="1.75"/><circle cx="544.8" cy="33.9" r="1.75"/></g>
<rect x="567.3" y="27" width="1.7" height="13.6" fill="#3a3a3a"/>
<!-- avatar -->
<defs>
<radialGradient id="av" cx="0.5" cy="0.5" r="0.5"><stop offset="0" stop-color="#4ad6f8"/><stop offset="0.7" stop-color="#46d2f6"/><stop offset="0.88" stop-color="#7fe4fb"/><stop offset="1" stop-color="#c4f5ff"/></radialGradient>
<linearGradient id="av2" x1="0.2" y1="0" x2="0.6" y2="1"><stop offset="0" stop-color="#dcfbff" stop-opacity="0.8"/><stop offset="0.45" stop-color="#9eeefc" stop-opacity="0.1"/><stop offset="1" stop-color="#22b4ee" stop-opacity="0.4"/></linearGradient>
<filter id="avb" x="-30%" y="-30%" width="160%" height="160%"><feGaussianBlur stdDeviation="0.9"/></filter>
<clipPath id="avc"><circle cx="697" cy="34" r="13.6"/></clipPath>
</defs>
<circle cx="697" cy="34" r="14" fill="url(#av)"/>
<circle cx="697" cy="34" r="13.4" fill="url(#av2)"/>
<g clip-path="url(#avc)">
<path d="M694 23.5 Q702.5 25.5 702.4 36.5 Q699.5 28.5 692.6 27.4 Z" fill="#ecfdff" opacity="0.9" filter="url(#avb)"/>
<path d="M704.5 23 Q710.5 30 708.5 40" fill="none" stroke="#d4f8ff" stroke-width="2.2" opacity="0.75" stroke-linecap="round" filter="url(#avb)"/>
<path d="M684 38 Q686 45 694 47.4" fill="none" stroke="#e0fbff" stroke-width="1.6" opacity="0.6" filter="url(#avb)"/>
</g>
<circle cx="687.3" cy="31" r="1.2" fill="#2f7f9f"/><circle cx="692" cy="31.7" r="1.2" fill="#2f7f9f"/>
<path d="M689 34.6 Q690 35.6 691 34.8" fill="none" stroke="#3a9cc0" stroke-width="0.7"/>
<!-- play controls -->
<g fill="#fff" stroke="#fff" stroke-width="2" stroke-linejoin="round">
<path d="M21.6 573.6 L33.6 581 L21.6 588.6 Z"/>
<path d="M77 574.6 L68.6 581 L77 587.4 Z"/>
<path d="M103.2 574.6 L111.6 581 L103.2 587.4 Z"/>
</g>
<rect x="62.6" y="573.4" width="3.2" height="15" rx="1.2" fill="#fff"/>
<rect x="113.8" y="573.4" width="3.2" height="15" rx="1.2" fill="#fff"/>
<!-- svip badge -->
<rect x="520.4" y="561.8" width="29" height="11.4" rx="4.2" fill="#3a2a24" stroke="#5e443a" stroke-width="1"/>
<text x="535" y="570.6" font-family="'Liberation Sans',sans-serif" font-size="8.6" font-weight="bold" font-style="italic" fill="#f0d0b0" text-anchor="middle" textLength="19.5" lengthAdjust="spacingAndGlyphs">SVIP</text>
<!-- settings -->
<g fill="none" stroke="#fff" stroke-width="2.2" stroke-linejoin="round" transform="translate(-0.7 -0.7)">
<path d="M606.6 581.2 L610.8 574.2 H619.2 L623.4 581.2 L619.2 588.2 H610.8 Z"/>
<circle cx="615" cy="581.2" r="3"/>
</g>
<!-- volume -->
<g fill="none" stroke="#fff" stroke-width="2" stroke-linejoin="round" stroke-linecap="round">
<path d="M650 577.6 H654 L659.8 573.2 V588.6 L654 584.2 H650 Z"/>
<path d="M663 576.9 A5 5 0 0 1 663 585.1 M664.8 573.4 A8.8 8.8 0 0 1 664.8 588.4" stroke-width="2.1"/>
</g>
<!-- fullscreen -->
<g fill="none" stroke="#fff" stroke-width="2.2" stroke-linecap="round" stroke-linejoin="round" transform="translate(0 -0.8)">
<path d="M695.4 578 V575.6 Q695.4 574 697 574 H699.4 M704.4 574 H706.8 Q708.4 574 708.4 575.6 V578 M708.4 583 V585.4 Q708.4 587 706.8 587 H704.4 M699.4 587 H697 Q695.4 587 695.4 585.4 V583"/>
</g>
</svg>

<div class="abs t" style="left:10px;top:533px">00:18:30</div>
<div class="abs" id="bar"></div>
<div class="abs" id="fill"></div>
<div class="abs" id="knob"></div>
<div class="abs t" style="left:662px;top:533px">02:16:10</div>

<div class="abs lbl" style="left:344px;top:571px">倍速</div>
<div class="abs lbl" style="left:397px;top:571px">超清</div>
<div class="abs lbl" style="left:449px;top:571px">字幕</div>
<div class="abs lbl" style="left:501px;top:571px">查找</div>
<div class="abs lbl" style="left:553px;top:571px">选集</div>
</body>
</html>
